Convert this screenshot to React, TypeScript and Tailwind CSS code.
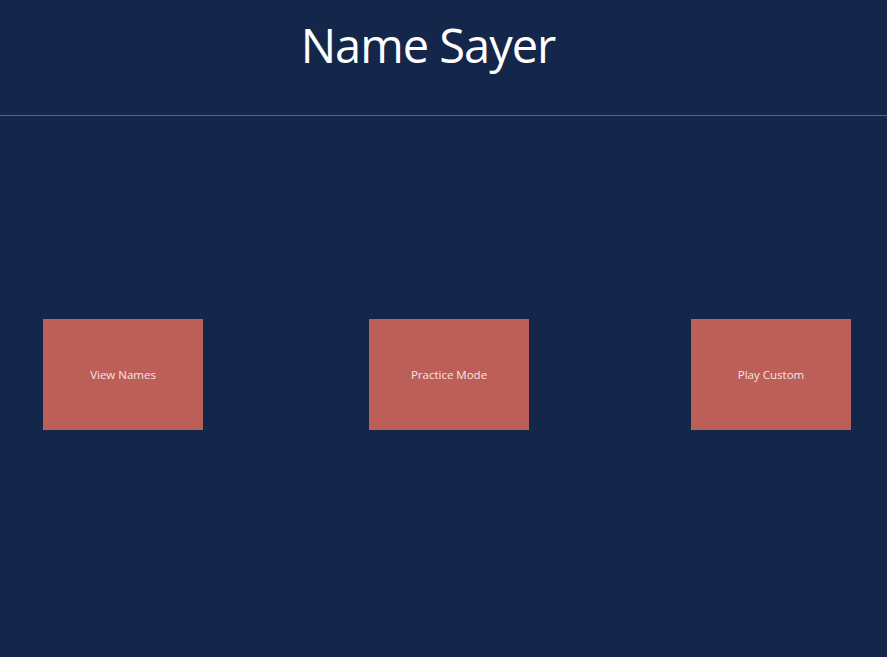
export default function App() {
  const btn =
    "w-[160px] h-[111px] bg-[#bc5f58] text-[#f6e4e4] text-[11.5px] flex items-center justify-center shrink-0";
  return (
    <div
      className="w-[887px] h-[657px] bg-[#142649] flex flex-col overflow-hidden"
      style={{ fontFamily: '"Open Sans", "Noto Sans", sans-serif' }}
    >
      <div className="h-[115px] shrink-0 flex justify-center pr-[31px] pt-[13px]">
        <h1 className="text-[47px] leading-[64px] text-white font-normal tracking-[-1px]">
          Name Sayer
        </h1>
      </div>
      <div className="h-px bg-[#5b6478] shrink-0" />
      <div className="flex-1 flex items-start pt-[203px] pl-[43px]">
        <div className={btn}>View Names</div>
        <div className={btn + " ml-[166px]"}>Practice Mode</div>
        <div className={btn + " ml-[162px]"}>Play Custom</div>
      </div>
    </div>
  );
}
